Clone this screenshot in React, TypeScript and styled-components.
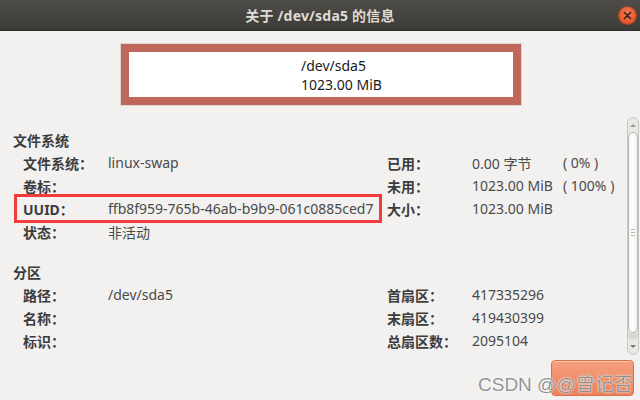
import styled, { createGlobalStyle } from 'styled-components';

const GlobalStyle = createGlobalStyle`
  html, body {
    margin: 0;
    padding: 0;
    background: #f2f1f0;
  }
  body {
    font-family: 'Noto Sans', 'Noto Sans CJK SC', sans-serif;
  }
`;

const Window = styled.div`
  width: 640px;
  height: 400px;
  overflow: hidden;
  display: flex;
  flex-direction: column;
  background: #f2f1f0;
  color: #3c3c3c;
  font-size: 14px;
`;

const TitleBar = styled.div`
  height: 31px;
  flex: none;
  display: grid;
  grid-template-columns: 1fr auto 1fr;
  align-items: center;
  background: linear-gradient(#4f4d49, #3c3b37);
  border-bottom: 1px solid #2f2e2b;
  box-sizing: border-box;

  .title {
    grid-column: 2;
    color: #dfdbd2;
    font-weight: 700;
    font-size: 14px;
    letter-spacing: 0.2px;
  }
`;

const CloseButton = styled.div`
  grid-column: 3;
  justify-self: end;
  margin-right: 4px;
  width: 17px;
  height: 17px;
  border-radius: 50%;
  background: radial-gradient(circle at 50% 35%, #f47a4f, #df4a1c);
  box-shadow: 0 0 0 1px #b9441f;
  display: flex;
  align-items: center;
  justify-content: center;
`;

const Content = styled.div`
  display: flex;
  flex: none;
`;

const Main = styled.div`
  flex: 1;
  padding-left: 13px;
`;

const DeviceBox = styled.div`
  margin: 12px 0 0 107px;
  width: 402px;
  height: 63px;
  box-sizing: border-box;
  border: 1px solid #d8d6d3;
  display: flex;
`;

const DeviceInner = styled.div`
  flex: 1;
  border: 8px solid #c0675b;
  background: #ffffff;
  display: flex;
  flex-direction: column;
  justify-content: center;
  padding: 1px 0 0 172px;
  color: #1a1a1a;
  line-height: 19px;
  font-size: 14px;
`;

const SectionTitle = styled.div<{ $top: number }>`
  margin-top: ${(p) => p.$top}px;
  font-weight: 700;
  line-height: 20px;
  color: #3c3c3c;
`;

const InfoGrid = styled.div`
  display: grid;
  grid-template-columns: 85px 279px 85px 91px auto;
  grid-auto-rows: 23px;
  align-items: center;
  margin-left: 10px;
  white-space: nowrap;
`;

const Label = styled.div<{ $col: number; $row: number }>`
  grid-column: ${(p) => p.$col};
  grid-row: ${(p) => p.$row};
  font-weight: 700;
  color: #3c3c3c;
`;

const Value = styled.div<{ $col: number; $row: number }>`
  grid-column: ${(p) => p.$col};
  grid-row: ${(p) => p.$row};
  color: #4a4a4a;
`;

const Highlight = styled.div<{ $row: number }>`
  grid-column: 1 / 3;
  grid-row: ${(p) => p.$row};
  align-self: stretch;
  margin: -3px 5px -3px -9px;
  border: 3px solid #f23c3c;
  box-sizing: border-box;
  pointer-events: none;
`;

const ScrollBar = styled.div`
  flex: none;
  width: 12px;
  height: 238px;
  margin: 86px 1px 0 0;
  box-sizing: border-box;
  border: 1px solid #c9c7c3;
  border-radius: 6px;
  background: #e9e8e6;
  display: flex;
  flex-direction: column;
  align-items: center;
`;

const Arrow = styled.div<{ $down?: boolean }>`
  flex: none;
  width: 0;
  height: 0;
  margin: ${(p) => (p.$down ? '5px 0 6px' : '6px 0 5px')};
  border-left: 3px solid transparent;
  border-right: 3px solid transparent;
  ${(p) =>
    p.$down ? 'border-top: 3px solid #7a7874;' : 'border-bottom: 3px solid #9a9894;'}
`;

const Thumb = styled.div`
  width: 10px;
  height: 201px;
  box-sizing: border-box;
  border: 1px solid #b8b6b2;
  border-radius: 5px;
  background: linear-gradient(90deg, #f7f7f6, #ffffff 50%, #efeeec);
  display: flex;
  flex-direction: column;
  align-items: center;
  justify-content: center;
  gap: 2px;

  span {
    width: 4px;
    height: 1px;
    background: #b8b6b2;
  }
`;

const TrackRest = styled.div`
  flex: 1;
  width: 10px;
  background: #d9d8d5;
  border-radius: 0 0 5px 5px;
`;

const Footer = styled.div`
  position: relative;
  display: flex;
  justify-content: flex-end;
  margin-top: 5px;
  padding-right: 6px;
`;

const CloseAction = styled.div`
  width: 83px;
  height: 36px;
  box-sizing: border-box;
  border: 1px solid #d9714c;
  border-radius: 4px;
  background: linear-gradient(#f5a080, #ec8058);
  box-shadow: inset 0 1px 0 #fbc5ad;
`;

const Watermark = styled.div`
  position: absolute;
  left: 478px;
  top: 9px;
  font-family: 'Liberation Sans', 'Noto Sans CJK SC', sans-serif;
  font-size: 19px;
  color: rgba(110, 110, 110, 0.75);
  text-shadow: 0 0 2px #ffffff, 0 0 1px #ffffff;
  white-space: nowrap;
  pointer-events: none;
`;

export default function App() {
  const fsLeft = [
    { label: '文件系统：', value: 'linux-swap' },
    { label: '卷标：', value: '' },
    { label: 'UUID：', value: 'ffb8f959-765b-46ab-b9b9-061c0885ced7' },
    { label: '状态：', value: '非活动' },
  ];
  const fsRight = [
    { label: '已用：', value: '0.00 字节', pct: '( 0% )' },
    { label: '未用：', value: '1023.00 MiB', pct: '( 100% )' },
    { label: '大小：', value: '1023.00 MiB', pct: '' },
  ];
  const partLeft = [
    { label: '路径：', value: '/dev/sda5' },
    { label: '名称：', value: '' },
    { label: '标识：', value: '' },
  ];
  const partRight = [
    { label: '首扇区：', value: '417335296' },
    { label: '末扇区：', value: '419430399' },
    { label: '总扇区数：', value: '2095104' },
  ];

  return (
    <Window>
      <GlobalStyle />
      <TitleBar>
        <span className="title">关于 /dev/sda5 的信息</span>
        <CloseButton>
          <svg width="9" height="9" viewBox="0 0 9 9">
            <path d="M1.5 1.5 L7.5 7.5 M7.5 1.5 L1.5 7.5" stroke="#3a2018" strokeWidth="1.6" strokeLinecap="round" />
          </svg>
        </CloseButton>
      </TitleBar>

      <Content>
        <Main>
          <DeviceBox>
            <DeviceInner>
              <div>/dev/sda5</div>
              <div>1023.00 MiB</div>
            </DeviceInner>
          </DeviceBox>

          <SectionTitle $top={25}>文件系统</SectionTitle>
          <InfoGrid>
            {fsLeft.map((r, i) => (
              <Label key={'l' + i} $col={1} $row={i + 1}>
                {r.label}
              </Label>
            ))}
            {fsLeft.map((r, i) => (
              <Value key={'v' + i} $col={2} $row={i + 1}>
                {r.value}
              </Value>
            ))}
            <Highlight $row={3} />
            {fsRight.map((r, i) => (
              <Label key={'rl' + i} $col={3} $row={i + 1}>
                {r.label}
              </Label>
            ))}
            {fsRight.map((r, i) => (
              <Value key={'rv' + i} $col={4} $row={i + 1}>
                {r.value}
              </Value>
            ))}
            {fsRight.map((r, i) => (
              <Value key={'rp' + i} $col={5} $row={i + 1}>
                {r.pct}
              </Value>
            ))}
          </InfoGrid>

          <SectionTitle $top={20}>分区</SectionTitle>
          <InfoGrid>
            {partLeft.map((r, i) => (
              <Label key={'pl' + i} $col={1} $row={i + 1}>
                {r.label}
              </Label>
            ))}
            {partLeft.map((r, i) => (
              <Value key={'pv' + i} $col={2} $row={i + 1}>
                {r.value}
              </Value>
            ))}
            {partRight.map((r, i) => (
              <Label key={'prl' + i} $col={3} $row={i + 1}>
                {r.label}
              </Label>
            ))}
            {partRight.map((r, i) => (
              <Value key={'prv' + i} $col={4} $row={i + 1}>
                {r.value}
              </Value>
            ))}
          </InfoGrid>
        </Main>

        <ScrollBar>
          <Arrow />
          <Thumb>
            <span />
            <span />
            <span />
          </Thumb>
          <TrackRest />
          <Arrow $down />
        </ScrollBar>
      </Content>

      <Footer>
        <CloseAction />
        <Watermark>CSDN @@曾记否</Watermark>
      </Footer>
    </Window>
  );
}
